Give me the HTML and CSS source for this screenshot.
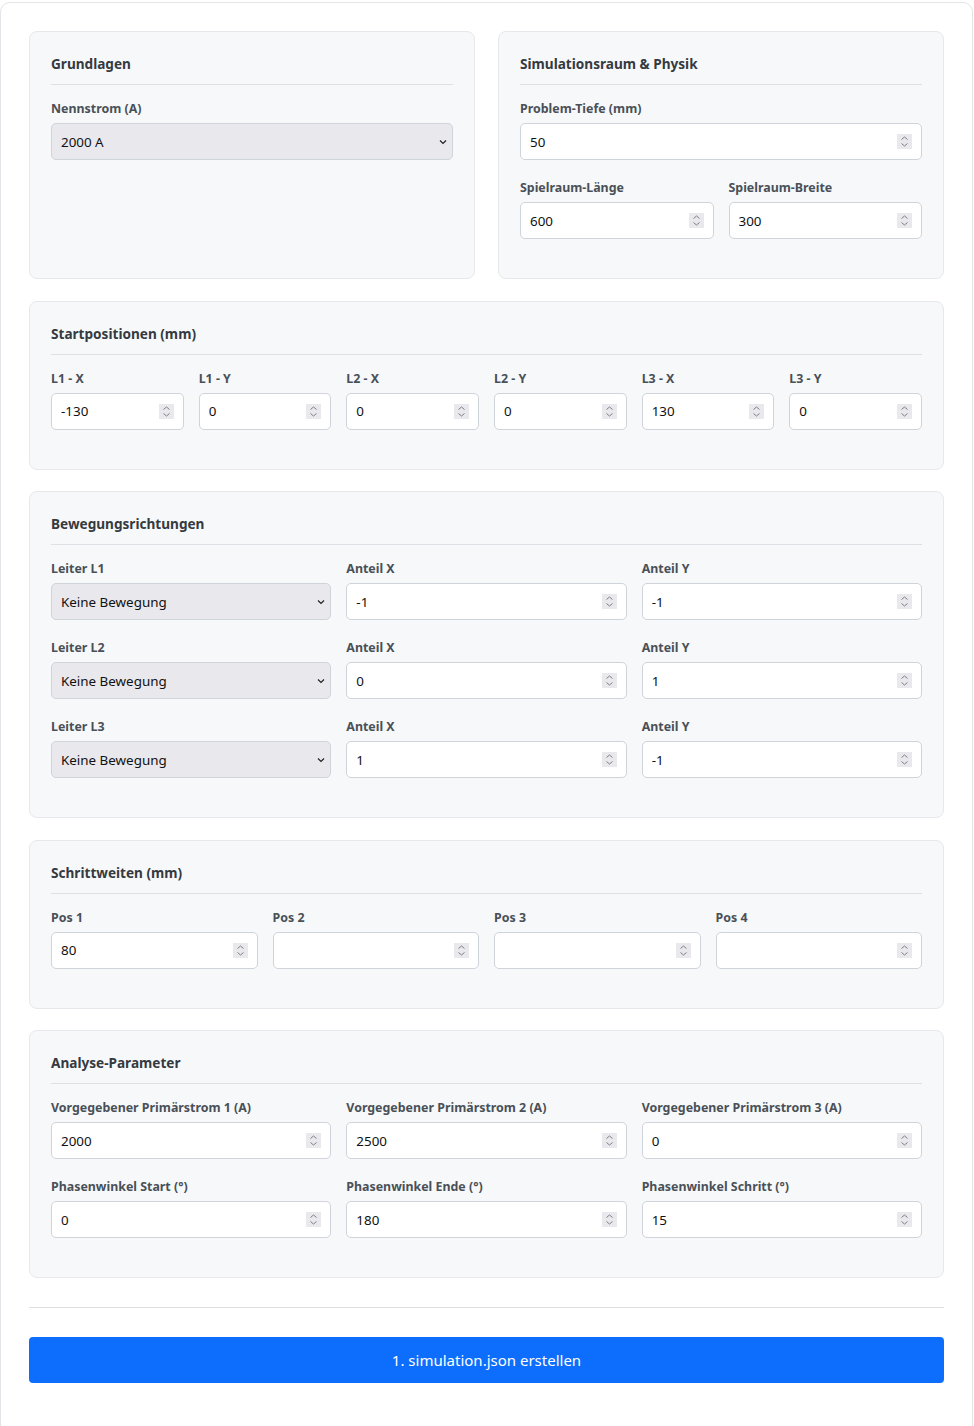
FILE: index.html
```html
<!DOCTYPE html>
<html lang="de">
<head>
<meta charset="utf-8">
<title>Simulation</title>
<link rel="stylesheet" href="styles.css">
</head>
<body>
<div class="container">
  <div class="row-2">
    <section class="card">
      <h2 class="card-title">Grundlagen</h2>
      <div class="group">
        <label class="lbl">Nennstrom (A)</label>
        <div class="field">
          <select class="select"><option>2000 A</option></select>
          <svg class="chev" width="8" height="6" viewBox="0 0 8 6"><path d="M1 1.5 L4 4.5 L7 1.5" fill="none" stroke="#222" stroke-width="1.2"/></svg>
        </div>
      </div>
    </section>
    <section class="card">
      <h2 class="card-title">Simulationsraum &amp; Physik</h2>
      <div class="group">
        <label class="lbl">Problem-Tiefe (mm)</label>
        <div class="field"><input class="inp" type="number" value="50"><svg class="spin" width="15" height="15" viewBox="0 0 15 15"><rect width="15" height="15" fill="#e9e9ed"/><path d="M4.5 5.5 L7.5 3 L10.5 5.5 M4.5 9.5 L7.5 12 L10.5 9.5" fill="none" stroke="#7d7d84" stroke-width="1"/></svg></div>
      </div>
      <div class="grid grid-2">
        <div class="group">
          <label class="lbl">Spielraum-Länge</label>
          <div class="field"><input class="inp" type="number" value="600"><svg class="spin" width="15" height="15" viewBox="0 0 15 15"><rect width="15" height="15" fill="#e9e9ed"/><path d="M4.5 5.5 L7.5 3 L10.5 5.5 M4.5 9.5 L7.5 12 L10.5 9.5" fill="none" stroke="#7d7d84" stroke-width="1"/></svg></div>
        </div>
        <div class="group">
          <label class="lbl">Spielraum-Breite</label>
          <div class="field"><input class="inp" type="number" value="300"><svg class="spin" width="15" height="15" viewBox="0 0 15 15"><rect width="15" height="15" fill="#e9e9ed"/><path d="M4.5 5.5 L7.5 3 L10.5 5.5 M4.5 9.5 L7.5 12 L10.5 9.5" fill="none" stroke="#7d7d84" stroke-width="1"/></svg></div>
        </div>
      </div>
    </section>
  </div>

  <section class="card">
    <h2 class="card-title">Startpositionen (mm)</h2>
    <div class="grid grid-6">
      <div class="group"><label class="lbl">L1 - X</label><div class="field"><input class="inp" type="number" value="-130"><svg class="spin" width="15" height="15" viewBox="0 0 15 15"><rect width="15" height="15" fill="#e9e9ed"/><path d="M4.5 5.5 L7.5 3 L10.5 5.5 M4.5 9.5 L7.5 12 L10.5 9.5" fill="none" stroke="#7d7d84" stroke-width="1"/></svg></div></div>
      <div class="group"><label class="lbl">L1 - Y</label><div class="field"><input class="inp" type="number" value="0"><svg class="spin" width="15" height="15" viewBox="0 0 15 15"><rect width="15" height="15" fill="#e9e9ed"/><path d="M4.5 5.5 L7.5 3 L10.5 5.5 M4.5 9.5 L7.5 12 L10.5 9.5" fill="none" stroke="#7d7d84" stroke-width="1"/></svg></div></div>
      <div class="group"><label class="lbl">L2 - X</label><div class="field"><input class="inp" type="number" value="0"><svg class="spin" width="15" height="15" viewBox="0 0 15 15"><rect width="15" height="15" fill="#e9e9ed"/><path d="M4.5 5.5 L7.5 3 L10.5 5.5 M4.5 9.5 L7.5 12 L10.5 9.5" fill="none" stroke="#7d7d84" stroke-width="1"/></svg></div></div>
      <div class="group"><label class="lbl">L2 - Y</label><div class="field"><input class="inp" type="number" value="0"><svg class="spin" width="15" height="15" viewBox="0 0 15 15"><rect width="15" height="15" fill="#e9e9ed"/><path d="M4.5 5.5 L7.5 3 L10.5 5.5 M4.5 9.5 L7.5 12 L10.5 9.5" fill="none" stroke="#7d7d84" stroke-width="1"/></svg></div></div>
      <div class="group"><label class="lbl">L3 - X</label><div class="field"><input class="inp" type="number" value="130"><svg class="spin" width="15" height="15" viewBox="0 0 15 15"><rect width="15" height="15" fill="#e9e9ed"/><path d="M4.5 5.5 L7.5 3 L10.5 5.5 M4.5 9.5 L7.5 12 L10.5 9.5" fill="none" stroke="#7d7d84" stroke-width="1"/></svg></div></div>
      <div class="group"><label class="lbl">L3 - Y</label><div class="field"><input class="inp" type="number" value="0"><svg class="spin" width="15" height="15" viewBox="0 0 15 15"><rect width="15" height="15" fill="#e9e9ed"/><path d="M4.5 5.5 L7.5 3 L10.5 5.5 M4.5 9.5 L7.5 12 L10.5 9.5" fill="none" stroke="#7d7d84" stroke-width="1"/></svg></div></div>
    </div>
  </section>

  <section class="card">
    <h2 class="card-title">Bewegungsrichtungen</h2>
    <div class="grid grid-3">
      <div class="group">
        <label class="lbl">Leiter L1</label>
        <div class="field">
          <select class="select"><option>Keine Bewegung</option></select>
          <svg class="chev" width="8" height="6" viewBox="0 0 8 6"><path d="M1 1.5 L4 4.5 L7 1.5" fill="none" stroke="#222" stroke-width="1.2"/></svg>
        </div>
      </div>
      <div class="group"><label class="lbl">Anteil X</label><div class="field"><input class="inp" type="number" value="-1"><svg class="spin" width="15" height="15" viewBox="0 0 15 15"><rect width="15" height="15" fill="#e9e9ed"/><path d="M4.5 5.5 L7.5 3 L10.5 5.5 M4.5 9.5 L7.5 12 L10.5 9.5" fill="none" stroke="#7d7d84" stroke-width="1"/></svg></div></div>
      <div class="group"><label class="lbl">Anteil Y</label><div class="field"><input class="inp" type="number" value="-1"><svg class="spin" width="15" height="15" viewBox="0 0 15 15"><rect width="15" height="15" fill="#e9e9ed"/><path d="M4.5 5.5 L7.5 3 L10.5 5.5 M4.5 9.5 L7.5 12 L10.5 9.5" fill="none" stroke="#7d7d84" stroke-width="1"/></svg></div></div>

      <div class="group">
        <label class="lbl">Leiter L2</label>
        <div class="field">
          <select class="select"><option>Keine Bewegung</option></select>
          <svg class="chev" width="8" height="6" viewBox="0 0 8 6"><path d="M1 1.5 L4 4.5 L7 1.5" fill="none" stroke="#222" stroke-width="1.2"/></svg>
        </div>
      </div>
      <div class="group"><label class="lbl">Anteil X</label><div class="field"><input class="inp" type="number" value="0"><svg class="spin" width="15" height="15" viewBox="0 0 15 15"><rect width="15" height="15" fill="#e9e9ed"/><path d="M4.5 5.5 L7.5 3 L10.5 5.5 M4.5 9.5 L7.5 12 L10.5 9.5" fill="none" stroke="#7d7d84" stroke-width="1"/></svg></div></div>
      <div class="group"><label class="lbl">Anteil Y</label><div class="field"><input class="inp" type="number" value="1"><svg class="spin" width="15" height="15" viewBox="0 0 15 15"><rect width="15" height="15" fill="#e9e9ed"/><path d="M4.5 5.5 L7.5 3 L10.5 5.5 M4.5 9.5 L7.5 12 L10.5 9.5" fill="none" stroke="#7d7d84" stroke-width="1"/></svg></div></div>

      <div class="group">
        <label class="lbl">Leiter L3</label>
        <div class="field">
          <select class="select"><option>Keine Bewegung</option></select>
          <svg class="chev" width="8" height="6" viewBox="0 0 8 6"><path d="M1 1.5 L4 4.5 L7 1.5" fill="none" stroke="#222" stroke-width="1.2"/></svg>
        </div>
      </div>
      <div class="group"><label class="lbl">Anteil X</label><div class="field"><input class="inp" type="number" value="1"><svg class="spin" width="15" height="15" viewBox="0 0 15 15"><rect width="15" height="15" fill="#e9e9ed"/><path d="M4.5 5.5 L7.5 3 L10.5 5.5 M4.5 9.5 L7.5 12 L10.5 9.5" fill="none" stroke="#7d7d84" stroke-width="1"/></svg></div></div>
      <div class="group"><label class="lbl">Anteil Y</label><div class="field"><input class="inp" type="number" value="-1"><svg class="spin" width="15" height="15" viewBox="0 0 15 15"><rect width="15" height="15" fill="#e9e9ed"/><path d="M4.5 5.5 L7.5 3 L10.5 5.5 M4.5 9.5 L7.5 12 L10.5 9.5" fill="none" stroke="#7d7d84" stroke-width="1"/></svg></div></div>
    </div>
  </section>

  <section class="card">
    <h2 class="card-title">Schrittweiten (mm)</h2>
    <div class="grid grid-4">
      <div class="group"><label class="lbl">Pos 1</label><div class="field"><input class="inp" type="number" value="80"><svg class="spin" width="15" height="15" viewBox="0 0 15 15"><rect width="15" height="15" fill="#e9e9ed"/><path d="M4.5 5.5 L7.5 3 L10.5 5.5 M4.5 9.5 L7.5 12 L10.5 9.5" fill="none" stroke="#7d7d84" stroke-width="1"/></svg></div></div>
      <div class="group"><label class="lbl">Pos 2</label><div class="field"><input class="inp" type="number"><svg class="spin" width="15" height="15" viewBox="0 0 15 15"><rect width="15" height="15" fill="#e9e9ed"/><path d="M4.5 5.5 L7.5 3 L10.5 5.5 M4.5 9.5 L7.5 12 L10.5 9.5" fill="none" stroke="#7d7d84" stroke-width="1"/></svg></div></div>
      <div class="group"><label class="lbl">Pos 3</label><div class="field"><input class="inp" type="number"><svg class="spin" width="15" height="15" viewBox="0 0 15 15"><rect width="15" height="15" fill="#e9e9ed"/><path d="M4.5 5.5 L7.5 3 L10.5 5.5 M4.5 9.5 L7.5 12 L10.5 9.5" fill="none" stroke="#7d7d84" stroke-width="1"/></svg></div></div>
      <div class="group"><label class="lbl">Pos 4</label><div class="field"><input class="inp" type="number"><svg class="spin" width="15" height="15" viewBox="0 0 15 15"><rect width="15" height="15" fill="#e9e9ed"/><path d="M4.5 5.5 L7.5 3 L10.5 5.5 M4.5 9.5 L7.5 12 L10.5 9.5" fill="none" stroke="#7d7d84" stroke-width="1"/></svg></div></div>
    </div>
  </section>

  <section class="card">
    <h2 class="card-title">Analyse-Parameter</h2>
    <div class="grid grid-3">
      <div class="group"><label class="lbl">Vorgegebener Primärstrom 1 (A)</label><div class="field"><input class="inp" type="number" value="2000"><svg class="spin" width="15" height="15" viewBox="0 0 15 15"><rect width="15" height="15" fill="#e9e9ed"/><path d="M4.5 5.5 L7.5 3 L10.5 5.5 M4.5 9.5 L7.5 12 L10.5 9.5" fill="none" stroke="#7d7d84" stroke-width="1"/></svg></div></div>
      <div class="group"><label class="lbl">Vorgegebener Primärstrom 2 (A)</label><div class="field"><input class="inp" type="number" value="2500"><svg class="spin" width="15" height="15" viewBox="0 0 15 15"><rect width="15" height="15" fill="#e9e9ed"/><path d="M4.5 5.5 L7.5 3 L10.5 5.5 M4.5 9.5 L7.5 12 L10.5 9.5" fill="none" stroke="#7d7d84" stroke-width="1"/></svg></div></div>
      <div class="group"><label class="lbl">Vorgegebener Primärstrom 3 (A)</label><div class="field"><input class="inp" type="number" value="0"><svg class="spin" width="15" height="15" viewBox="0 0 15 15"><rect width="15" height="15" fill="#e9e9ed"/><path d="M4.5 5.5 L7.5 3 L10.5 5.5 M4.5 9.5 L7.5 12 L10.5 9.5" fill="none" stroke="#7d7d84" stroke-width="1"/></svg></div></div>
      <div class="group"><label class="lbl">Phasenwinkel Start (°)</label><div class="field"><input class="inp" type="number" value="0"><svg class="spin" width="15" height="15" viewBox="0 0 15 15"><rect width="15" height="15" fill="#e9e9ed"/><path d="M4.5 5.5 L7.5 3 L10.5 5.5 M4.5 9.5 L7.5 12 L10.5 9.5" fill="none" stroke="#7d7d84" stroke-width="1"/></svg></div></div>
      <div class="group"><label class="lbl">Phasenwinkel Ende (°)</label><div class="field"><input class="inp" type="number" value="180"><svg class="spin" width="15" height="15" viewBox="0 0 15 15"><rect width="15" height="15" fill="#e9e9ed"/><path d="M4.5 5.5 L7.5 3 L10.5 5.5 M4.5 9.5 L7.5 12 L10.5 9.5" fill="none" stroke="#7d7d84" stroke-width="1"/></svg></div></div>
      <div class="group"><label class="lbl">Phasenwinkel Schritt (°)</label><div class="field"><input class="inp" type="number" value="15"><svg class="spin" width="15" height="15" viewBox="0 0 15 15"><rect width="15" height="15" fill="#e9e9ed"/><path d="M4.5 5.5 L7.5 3 L10.5 5.5 M4.5 9.5 L7.5 12 L10.5 9.5" fill="none" stroke="#7d7d84" stroke-width="1"/></svg></div></div>
    </div>
  </section>

  <hr class="divider">

  <button class="btn" type="button">1. simulation.json erstellen</button>
</div>
</body>
</html>
```

FILE: styles.css
```css
* { box-sizing: border-box; }

html, body {
  margin: 0;
  padding: 0;
  background: #ffffff;
}

body {
  padding-top: 2px;
  font-family: "Noto Sans", "Open Sans", "DejaVu Sans", sans-serif;
  color: #212529;
}

.container {
  width: 973px;
  border: 1px solid #e2e4e7;
  border-radius: 10px;
  padding: 28px 28px 60px;
  display: flex;
  flex-direction: column;
  gap: 21.5px;
}

.row-2 {
  display: grid;
  grid-template-columns: 1fr 1fr;
  gap: 23px;
}

.card {
  background: #f7f8fa;
  border: 1px solid #e6e8eb;
  border-radius: 8px;
  padding: 21px 21px 21px;
}

.card-title {
  margin: 0 0 14px;
  font-size: 13.6px;
  font-weight: 700;
  line-height: 22px;
  color: #343a40;
  padding-bottom: 9px;
  border-bottom: 1px solid #dde0e4;
}

.group {
  display: flex;
  flex-direction: column;
  margin-bottom: 18px;
}

.lbl {
  font-size: 12.4px;
  font-weight: 700;
  line-height: 20px;
  color: #495057;
  margin-bottom: 4px;
}

.grid {
  display: grid;
  column-gap: 15px;
}
.grid-2 { grid-template-columns: repeat(2, 1fr); }
.grid-3 { grid-template-columns: repeat(3, 1fr); }
.grid-4 { grid-template-columns: repeat(4, 1fr); }
.grid-6 { grid-template-columns: repeat(6, 1fr); }

.field {
  position: relative;
}

.inp, .select {
  display: block;
  width: 100%;
  height: 37px;
  border: 1px solid #ced4da;
  border-radius: 5px;
  padding: 0 30px 0 9px;
  font-family: "Noto Sans", "Open Sans", sans-serif;
  font-size: 13.4px;
  color: #111;
  background: #ffffff;
  outline: none;
  margin: 0;
}

.inp {
  -moz-appearance: textfield;
  appearance: textfield;
}

.inp::-webkit-inner-spin-button,
.inp::-webkit-outer-spin-button {
  -webkit-appearance: none;
  margin: 0;
}

.spin {
  position: absolute;
  right: 10px;
  top: 11px;
  pointer-events: none;
}

.select {
  appearance: none;
  -webkit-appearance: none;
  background: #e9e9ed;
}

.chev {
  position: absolute;
  right: 6px;
  top: 16px;
  pointer-events: none;
}

.divider {
  border: 0;
  border-top: 1px solid #dedede;
  margin: 7px 0 7.5px;
}

.btn {
  height: 46px;
  width: 100%;
  border: 0;
  border-radius: 4px;
  background: #0d6efd;
  color: #ffffff;
  font-family: "Noto Sans", "Open Sans", sans-serif;
  font-size: 15px;
  cursor: pointer;
}
```
